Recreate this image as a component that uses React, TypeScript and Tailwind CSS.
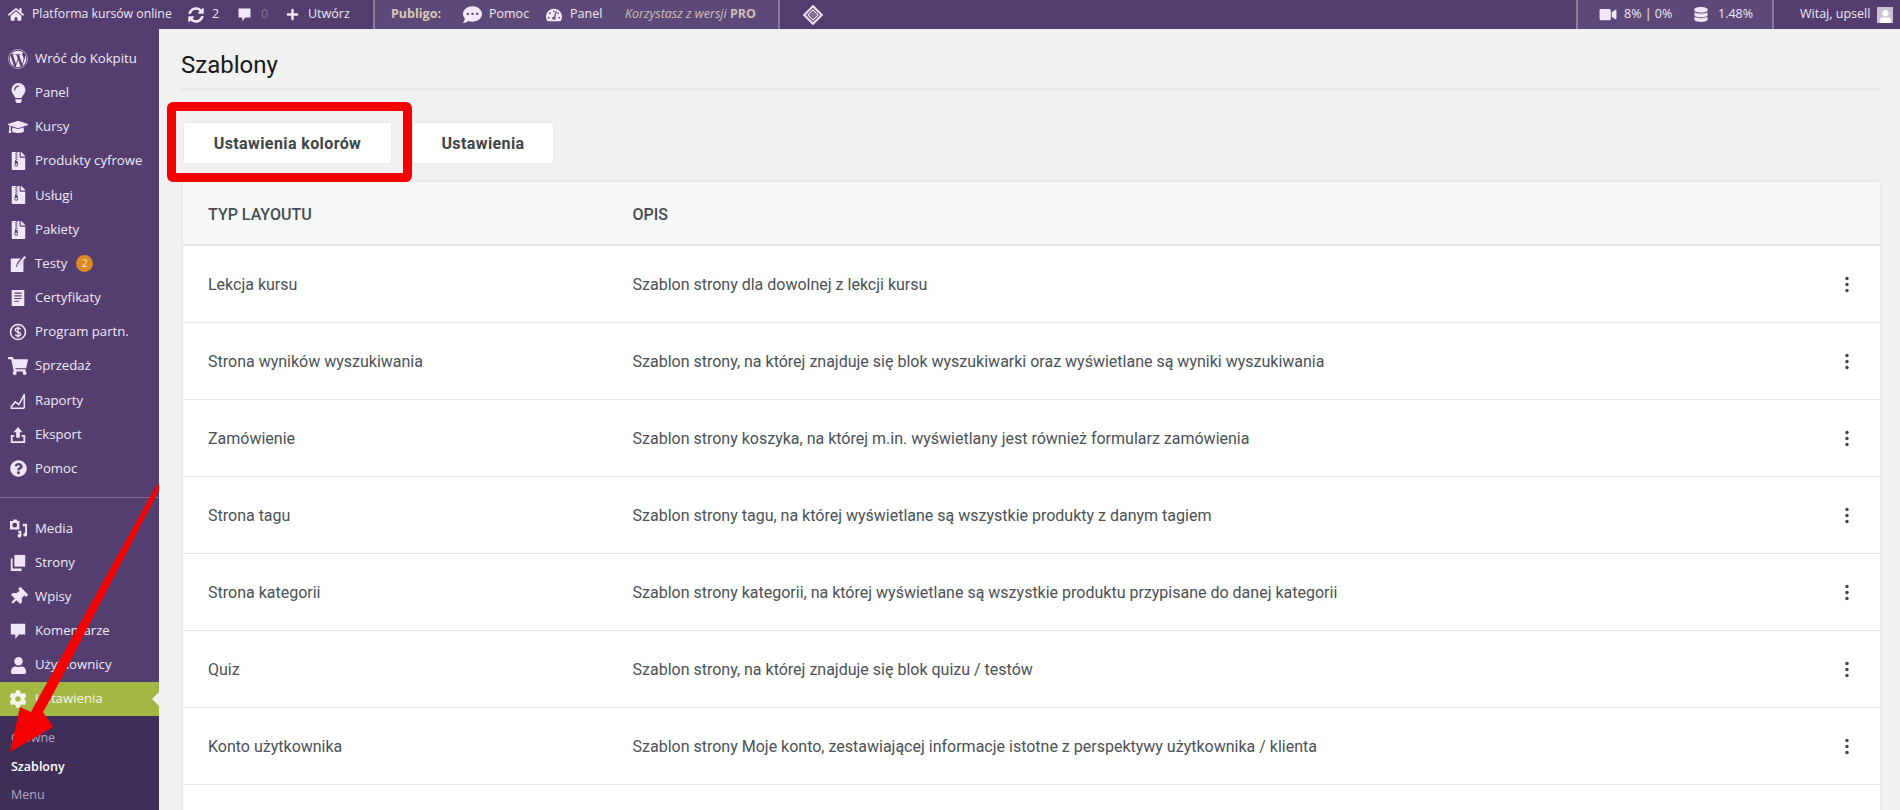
import type { ReactNode } from "react";
import {
  FaHome,
  FaSyncAlt,
  FaPlus,
  FaCommentDots,
  FaTachometerAlt,
  FaVideo,
  FaDatabase,
  FaUser,
  FaWordpress,
  FaLightbulb,
  FaGraduationCap,
  FaFileArchive,
  FaShoppingCart,
  FaQuestionCircle,
  FaThumbtack,
  FaCog,
} from "react-icons/fa";

const sans = "font-['Open_Sans',sans-serif]";

function CommentIcon({ className }: { className?: string }) {
  return (
    <svg viewBox="0 0 20 20" className={className} fill="currentColor">
      <path d="M2 2h16v12h-7l-4 5v-5H2z" />
    </svg>
  );
}

function CertIcon({ className }: { className?: string }) {
  return (
    <svg viewBox="0 0 20 20" className={className} fill="currentColor">
      <path
        fillRule="evenodd"
        d="M3 1h14v18H3zM6 4v1.200h8V4zM6 7v1.200h8V7zM6 10v1.200h8V10zM6 13v1.200h5V13z"
      />
    </svg>
  );
}

function DollarIcon({ className }: { className?: string }) {
  return (
    <svg viewBox="0 0 20 20" className={className} fill="none" stroke="currentColor">
      <circle cx="10" cy="10" r="8.300" strokeWidth="1.800" />
      <path d="M13 7c-.5-1-1.600-1.500-3-1.500-1.800 0-3 .9-3 2.200 0 3 6 1.600 6 4.500 0 1.300-1.200 2.300-3 2.300-1.500 0-2.600-.6-3.100-1.700M10 4v12" strokeWidth="1.500" />
    </svg>
  );
}

function ChartIcon({ className }: { className?: string }) {
  return (
    <svg viewBox="0 0 20 20" className={className} fill="none" stroke="currentColor" strokeWidth="1.700">
      <path d="M2 18h15M17 2v16M2 17l5-6 4 3 6-11" />
    </svg>
  );
}

function ExportIcon({ className }: { className?: string }) {
  return (
    <svg viewBox="0 0 20 20" className={className} fill="currentColor">
      <path d="M10 1l5 6h-3v6H8V7H5zM2 10h4v2H4v5h12v-5h-2v-2h4v9H2z" />
    </svg>
  );
}

function TestIcon({ className }: { className?: string }) {
  return (
    <svg viewBox="0 0 20 20" className={className} fill="currentColor">
      <path d="M2 4h11l-4 5-1.500 4.500L12 11l4-5v13H2zM17 1l2 1.500-8 9.500-2 .8.400-2.200z" />
    </svg>
  );
}

function MediaIcon({ className }: { className?: string }) {
  return (
    <svg viewBox="0 0 20 20" className={className} fill="currentColor">
      <path
        fillRule="evenodd"
        d="M1 2h3l1-1.500h3L9 2h2v9H1zM6 4a2.500 2.500 0 100 5 2.500 2.500 0 000-5z"
      />
      <path d="M13 5h6v11.500a2 2 0 11-2-2V7.500h-2.500V5zM9 13l4-1v5.500a2 2 0 11-2-2v-1.200l-1 .3z" />
    </svg>
  );
}

function PagesIcon({ className }: { className?: string }) {
  return (
    <svg viewBox="0 0 20 20" className={className} fill="currentColor">
      <path d="M6 1h12v13H6z" />
      <path d="M2 5h2v11h10v3H2z" />
    </svg>
  );
}

function PublIcon({ className }: { className?: string }) {
  return (
    <svg viewBox="0 0 20 20" className={className} fill="none" stroke="currentColor">
      <path d="M10 1l9 9-9 9-9-9z" fill="currentColor" fillOpacity="0.3" strokeWidth="1.800" />
      <path d="M10 5l5 5-5 5-5-5z" strokeWidth="1" />
    </svg>
  );
}

type MenuItem = { label: string; icon: ReactNode; badge?: string };

const ic = "w-[18px] h-[18px]";

const topMenu: MenuItem[] = [
  { label: "Wróć do Kokpitu", icon: <FaWordpress className="w-5 h-5" /> },
  { label: "Panel", icon: <FaLightbulb className="w-[17px] h-[20px]" /> },
  { label: "Kursy", icon: <FaGraduationCap className="w-5 h-5" /> },
  { label: "Produkty cyfrowe", icon: <FaFileArchive className="w-[15px] h-[18px]" /> },
  { label: "Usługi", icon: <FaFileArchive className="w-[15px] h-[18px]" /> },
  { label: "Pakiety", icon: <FaFileArchive className="w-[15px] h-[18px]" /> },
  { label: "Testy", icon: <TestIcon className={ic} />, badge: "2" },
  { label: "Certyfikaty", icon: <CertIcon className={ic} /> },
  { label: "Program partn.", icon: <DollarIcon className={ic} /> },
  { label: "Sprzedaż", icon: <FaShoppingCart className="w-5 h-[18px]" /> },
  { label: "Raporty", icon: <ChartIcon className={ic} /> },
  { label: "Eksport", icon: <ExportIcon className={ic} /> },
  { label: "Pomoc", icon: <FaQuestionCircle className="w-[17px] h-[17px]" /> },
];

const bottomMenu: MenuItem[] = [
  { label: "Media", icon: <MediaIcon className="w-[19px] h-[19px]" /> },
  { label: "Strony", icon: <PagesIcon className={ic} /> },
  { label: "Wpisy", icon: <FaThumbtack className="w-[18px] h-[18px] rotate-45" /> },
  { label: "Komentarze", icon: <CommentIcon className={ic} /> },
  { label: "Użytkownicy", icon: <FaUser className="w-[17px] h-[17px]" /> },
];

const rows = [
  ["Lekcja kursu", "Szablon strony dla dowolnej z lekcji kursu"],
  ["Strona wyników wyszukiwania", "Szablon strony, na której znajduje się blok wyszukiwarki oraz wyświetlane są wyniki wyszukiwania"],
  ["Zamówienie", "Szablon strony koszyka, na której m.in. wyświetlany jest również formularz zamówienia"],
  ["Strona tagu", "Szablon strony tagu, na której wyświetlane są wszystkie produkty z danym tagiem"],
  ["Strona kategorii", "Szablon strony kategorii, na której wyświetlane są wszystkie produktu przypisane do danej kategorii"],
  ["Quiz", "Szablon strony, na której znajduje się blok quizu / testów"],
  ["Konto użytkownika", "Szablon strony Moje konto, zestawiającej informacje istotne z perspektywy użytkownika / klienta"],
];

function SideRow({ item }: { item: MenuItem }) {
  return (
    <div className="flex items-center h-[34.2px] text-[13.200px] text-[#f1e9f8]">
      <span className="w-[35px] flex justify-center pl-[1px] text-[#efe7f8]">{item.icon}</span>
      <span>{item.label}</span>
      {item.badge && (
        <span className="ml-[9px] w-[17px] h-[17px] rounded-full bg-[#dc8a24] text-[10px] flex items-center justify-center text-[#f8e8d0]">
          {item.badge}
        </span>
      )}
    </div>
  );
}

export default function App() {
  return (
    <div className={`relative h-[810px] overflow-hidden flex flex-col bg-[#f1f1f1] ${sans}`}>
      {/* admin bar */}
      <header className="h-[29px] shrink-0 flex items-center text-[12.500px] text-[#f1e9f8] bg-[#523d6e]">
        <div className="flex items-center w-[373px] shrink-0">
          <FaHome className="ml-[8px] w-[16px] h-[15px]" />
          <span className="ml-[8px] w-[156px] text-[12.250px]">Platforma kursów online</span>
          <FaSyncAlt className="w-[16px] h-[16px]" />
          <span className="ml-[8px] w-[25px]">2</span>
          <CommentIcon className="w-[15px] h-[15px]" />
          <span className="ml-[9px] w-[25px] text-[#85769c]">0</span>
          <FaPlus className="w-[13px] h-[13px]" />
          <span className="ml-[9px]">Utwórz</span>
        </div>
        <div className="flex items-center w-[407px] h-full shrink-0 bg-[#5d4979] border-x-2 border-[#8a7a9f]">
          <span className="ml-[16px] w-[72px] font-bold text-[#d8c9b5]">Publigo:</span>
          <FaCommentDots className="w-[19px] h-[19px]" />
          <span className="ml-[7px] w-[57px]">Pomoc</span>
          <FaTachometerAlt className="w-[16px] h-[16px]" />
          <span className="ml-[8px] w-[55px]">Panel</span>
          <span className="italic text-[#cdbfb4] whitespace-nowrap">
            Korzystasz z wersji <b className="not-italic">PRO</b>
          </span>
        </div>
        <div className="flex-1 flex items-center">
          <PublIcon className="ml-[23px] w-[20px] h-[20px] text-[#f1e9f8]" />
        </div>
        <div className="flex items-center w-[198px] h-full shrink-0 bg-[#5d4979] border-x-2 border-[#8a7a9f]">
          <FaVideo className="ml-[21px] w-[18px] h-[15px]" />
          <span className="ml-[7px] w-[70px]">8% | 0%</span>
          <FaDatabase className="w-[14px] h-[15px]" />
          <span className="ml-[10px]">1.48%</span>
        </div>
        <span className="ml-[26px] w-[77px] whitespace-nowrap">Witaj, upsell</span>
        <span className="mr-[7px] w-[16px] h-[16px] bg-[#c9c2d2] flex items-end justify-center overflow-hidden">
          <FaUser className="w-[13px] h-[13px] text-white" />
        </span>
      </header>

      <div className="flex-1 flex min-h-0">
        {/* side menu */}
        <aside className="w-[159px] shrink-0 bg-[#533e6f] flex flex-col pt-[12.600px]">
          {topMenu.map((item) => (
            <SideRow key={item.label} item={item} />
          ))}
          <div className="mt-[11px] mb-[13.400px] h-px bg-[#7d6b97]" />
          {bottomMenu.map((item) => (
            <SideRow key={item.label} item={item} />
          ))}
          <div className="relative flex items-center h-[34px] bg-[#a3b744] text-[13.200px] text-[#f6f6e8]">
            <span className="w-[35px] flex justify-center pl-[1px]">
              <FaCog className="w-[18px] h-[18px]" />
            </span>
            <span>Ustawienia</span>
            <span className="absolute right-0 top-[10px] border-y-[7px] border-r-[7px] border-y-transparent border-r-[#f1f1f1]" />
          </div>
          <div className="flex-1 bg-[#3f2f58] pt-[8px] pl-[11px] text-[12.500px] text-[#b1a6c0] leading-[28.500px]">
            <div>Główne</div>
            <div className="font-semibold text-white">Szablony</div>
            <div>Menu</div>
          </div>
        </aside>

        {/* content */}
        <main className="flex-1 min-w-0 pl-[22px] pr-[20px] font-['Roboto',sans-serif]">
          <div className="h-[61px] flex items-center border-b-2 border-[#e8e8e8] pt-[13px]">
            <h1 className="text-[24px] font-normal text-[#16181a]">Szablony</h1>
          </div>
          <div className="relative mt-[32px] ml-[2px] flex gap-[20px] text-[16px] font-bold text-[#3d4449] tracking-[0.4px]">
            <button className="w-[209px] h-[42px] pt-[2px] bg-white border border-[#e9ebef] rounded-[2px]">Ustawienia kolorów</button>
            <button className="w-[142px] h-[42px] pt-[2px] bg-white border border-[#e9ebef] rounded-[2px]">Ustawienia</button>
            <div className="absolute left-[-16px] top-[-20px] w-[245px] h-[80px] border-[9px] border-[#f40000] rounded-[6px]" />
          </div>

          <div className="mt-[18px] ml-[2px] bg-white shadow-[0_0_3px_rgba(0,0,0,0.1)] text-[16px] text-[#4a5157]">
            <div className="h-[64px] pt-[4px] flex items-center bg-[#f7f8f9] border-b-2 border-[#e6e6e8] font-medium text-[#464c52]">
              <div className="pl-[25px] w-[449.500px]">TYP LAYOUTU</div>
              <div>OPIS</div>
            </div>
            {rows.map(([name, desc]) => (
              <div key={name} className="h-[77px] pt-[1px] flex items-center border-b border-[#e6e6e8]">
                <div className="pl-[25px] w-[449.500px]">{name}</div>
                <div className="flex-1">{desc}</div>
                <svg viewBox="0 0 4 20" className="mr-[31px] w-[4px] h-[17px] text-[#3f4448]" fill="currentColor">
                  <circle cx="2" cy="3" r="2" />
                  <circle cx="2" cy="10" r="2" />
                  <circle cx="2" cy="17" r="2" />
                </svg>
              </div>
            ))}
            <div className="h-[60px]" />
          </div>
        </main>
      </div>

      {/* red annotation arrow over the menu */}
      <svg className="absolute left-0 top-0 w-[170px] h-[810px] pointer-events-none" viewBox="0 0 170 810">
        <polygon points="159,484 159,490 50,700 43,712 53,727 10,752 20,707 31,712 38,699 156,486" fill="#f40000" />
      </svg>
    </div>
  );
}
